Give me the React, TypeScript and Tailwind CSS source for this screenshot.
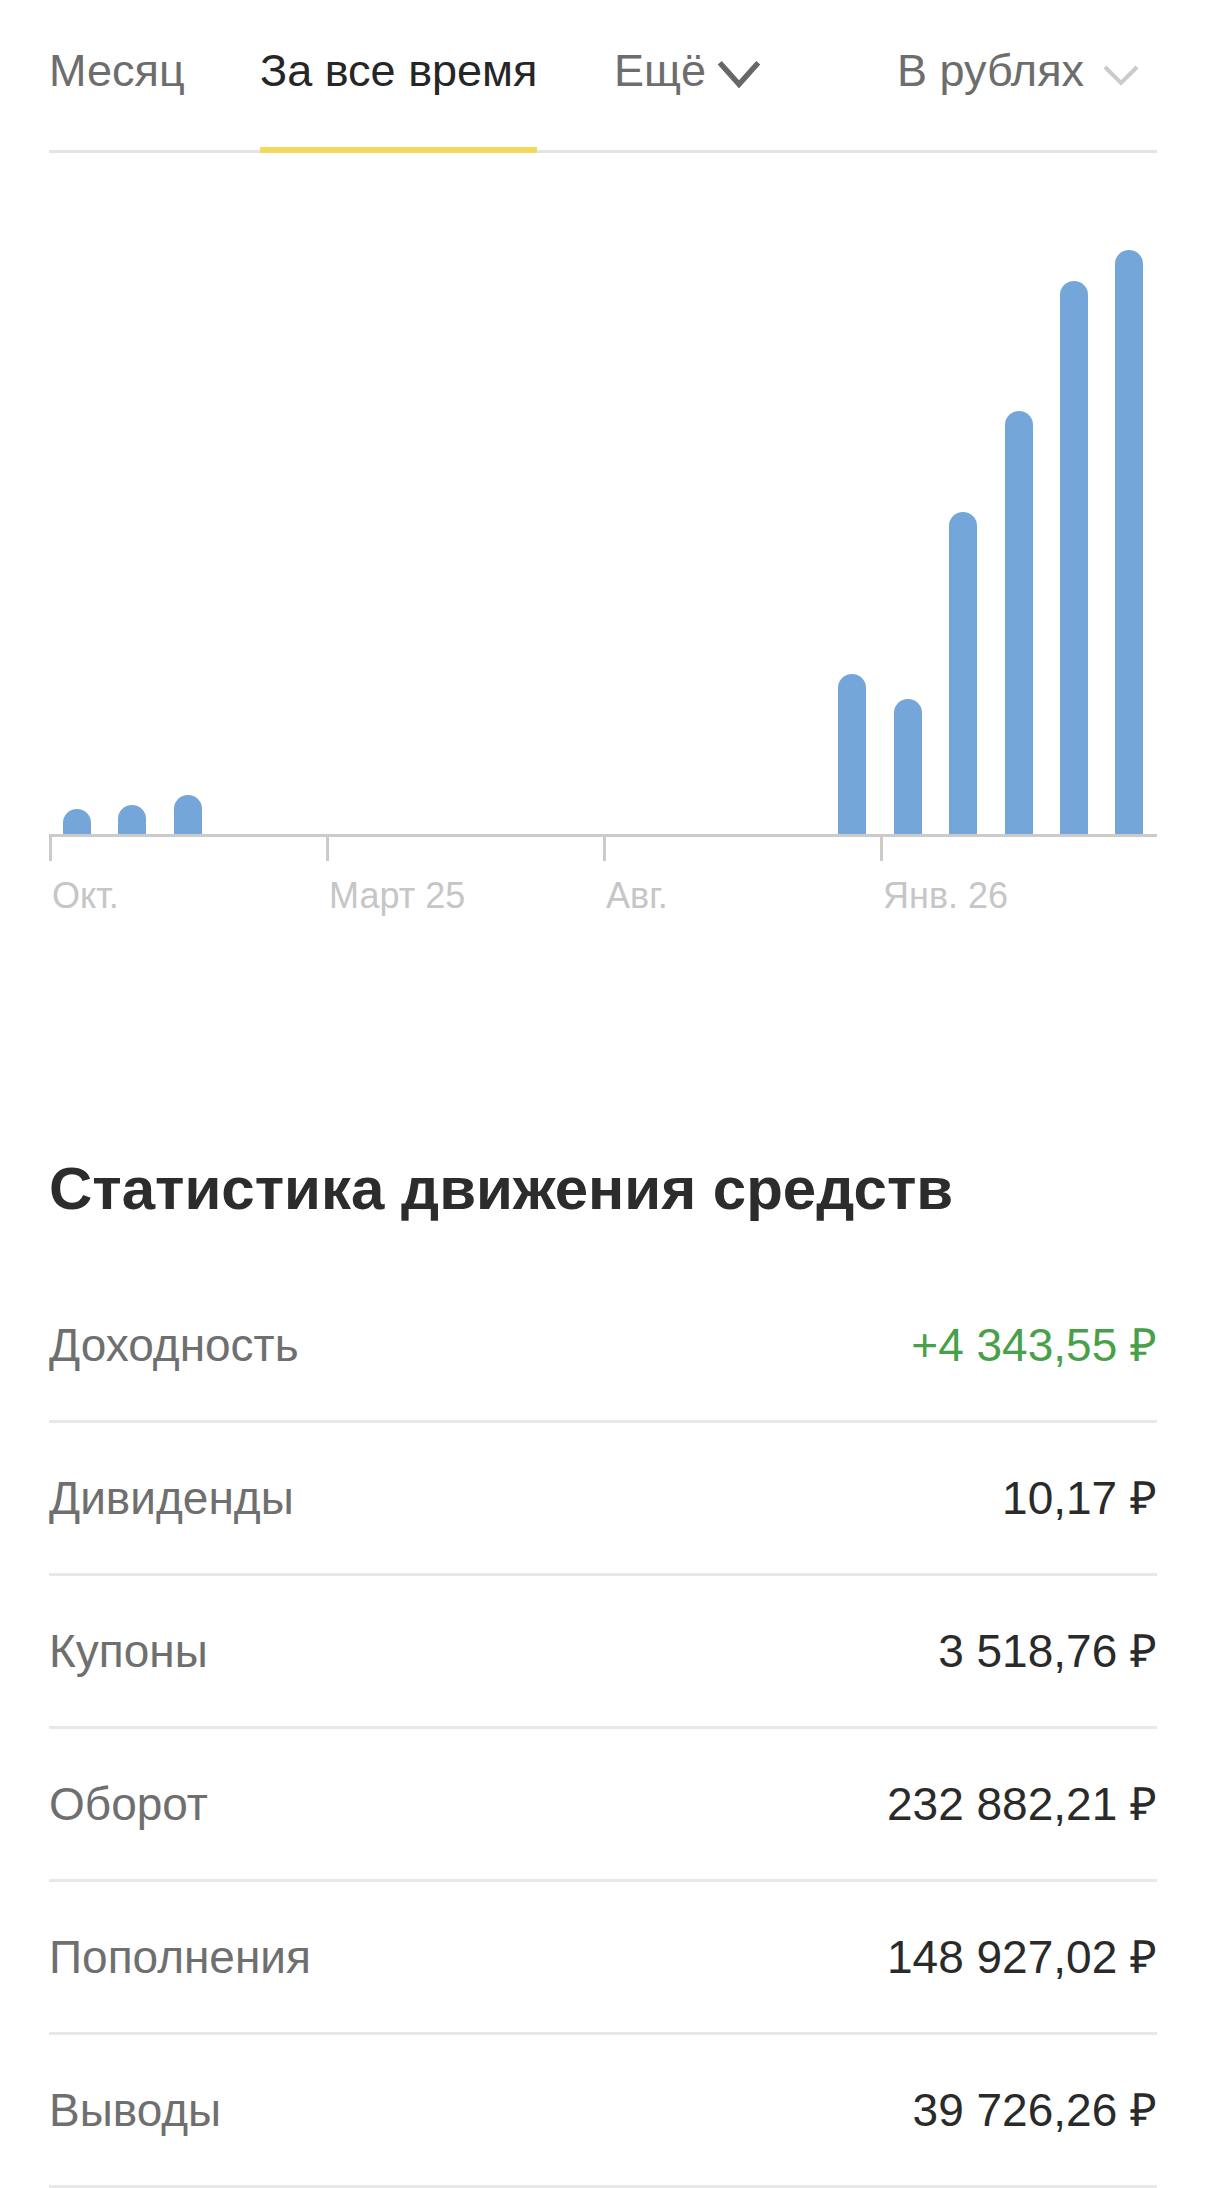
import React from 'react';

const BARS = [25, 29, 39, 0, 0, 0, 0, 0, 0, 0, 0, 0, 0, 0, 160, 135, 322, 423, 553, 584];

const TICKS = ['Окт.', 'Март 25', 'Авг.', 'Янв. 26'];

const ROWS: { label: string; value: string; positive?: boolean }[] = [
    { label: 'Доходность', value: '+4 343,55 ₽', positive: true },
    { label: 'Дивиденды', value: '10,17 ₽' },
    { label: 'Купоны', value: '3 518,76 ₽' },
    { label: 'Оборот', value: '232 882,21 ₽' },
    { label: 'Пополнения', value: '148 927,02 ₽' },
    { label: 'Выводы', value: '39 726,26 ₽' },
];

function Chevron({ color, w, h, stroke }: { color: string; w: number; h: number; stroke: number }) {
    return (
        <svg width={w} height={h} viewBox={`0 0 ${w} ${h}`} fill="none">
            <path
                d={`M${stroke / 2 + 1} ${stroke / 2 + 1} L${w / 2} ${h - stroke / 2 - 1} L${w - stroke / 2 - 1} ${stroke / 2 + 1}`}
                stroke={color}
                strokeWidth={stroke}
                strokeLinejoin="miter"
            />
        </svg>
    );
}

export default function App() {
    return (
        <div className="min-h-[2188px] w-[1206px] bg-white px-[49px] font-['Liberation_Sans',Arial,sans-serif]">
            {/* Tabs */}
            <div className="flex h-[153px] border-b-[3px] border-[#e4e4e4] text-[45px] leading-[45px]">
                <div className="w-[211px] pt-[48px] text-[#6d6d6d]">Месяц</div>
                <div className="w-[354px]">
                    <div className="relative inline-block h-[150px] pt-[48px] text-[#262626]">
                        За все время
                        <div className="absolute -bottom-[3px] left-0 right-0 h-[6px] bg-[#f4da5c]" />
                    </div>
                </div>
                <div className="flex h-[150px] items-start gap-[10px] pt-[48px] text-[#6d6d6d]">
                    <span>Ещё</span>
                    <div className="pt-[11px]">
                        <Chevron color="#676767" w={46} h={29} stroke={5.5} />
                    </div>
                </div>
                <div className="ml-auto flex h-[150px] items-start gap-[18px] pr-[17px] pt-[48px] text-[#6d6d6d]">
                    <span>В рублях</span>
                    <div className="pt-[16px]">
                        <Chevron color="#cbcbcb" w={38} h={22} stroke={4} />
                    </div>
                </div>
            </div>

            {/* Chart */}
            <div className="mt-[81px] flex h-[600px] items-end">
                {BARS.map((h, i) => (
                    <div key={i} className="flex flex-1 justify-center">
                        {h > 0 && <div className="w-[28px] rounded-t-full bg-[#74a6da]" style={{ height: h }} />}
                    </div>
                ))}
            </div>
            <div className="h-[3px] bg-[#cbcbcb]" />
            <div className="grid grid-cols-4">
                {TICKS.map((t) => (
                    <div key={t}>
                        <div className="h-[24px] w-[3px] bg-[#cbcbcb]" />
                        <div className="mt-[17px] pl-[3px] text-[36px] leading-[36px] text-[#c6c6c6]">{t}</div>
                    </div>
                ))}
            </div>

            {/* Stats */}
            <h2 className="mt-[245px] text-[60px] font-bold leading-[60px] text-[#2c2c2c]">Статистика движения средств</h2>
            <div className="mt-[51px]">
                {ROWS.map((r) => (
                    <div
                        key={r.label}
                        className="flex h-[153px] items-center justify-between border-b-[3px] border-[#e8e8e8] text-[46px] leading-[46px]"
                    >
                        <span className="text-[#6f6f6f]">{r.label}</span>
                        <span className={r.positive ? 'text-[#48a048]' : 'text-[#2a2a2a]'}>{r.value}</span>
                    </div>
                ))}
            </div>
        </div>
    );
}
